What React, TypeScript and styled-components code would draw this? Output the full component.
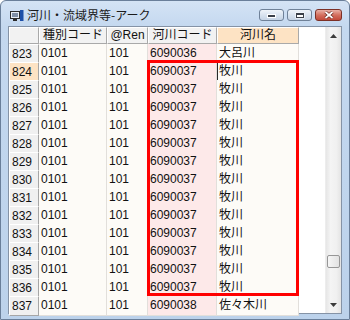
import React from "react";
import styled, { createGlobalStyle } from "styled-components";

const Global = createGlobalStyle`
  html, body { margin: 0; padding: 0; width: 350px; height: 320px; overflow: hidden; background: #ffffff; }
  * { box-sizing: border-box; }
`;

const FONT = `"Liberation Sans", "Noto Sans CJK JP", sans-serif`;

const Window = styled.div`
  width: 350px;
  height: 320px;
  display: flex;
  flex-direction: column;
  padding: 0 7px 5px 7px;
  background: linear-gradient(to bottom, #d4e3f5 0px, #c4d8ef 26px, #bcd2eb 100%);
  border: 1px solid #6a7f9a;
  border-radius: 6px 6px 0 0;
  font-family: ${FONT};
`;

const TitleBar = styled.div`
  height: 25px;
  display: flex;
  align-items: flex-start;
  padding-left: 2px;
`;

const TitleIcon = styled.svg`
  margin-top: 9px;
  width: 14px;
  height: 12px;
  flex: none;
`;

const TitleText = styled.div`
  margin-left: 3px;
  margin-top: 6px;
  font-size: 12px;
  line-height: 16px;
  color: #1b1b1b;
  white-space: nowrap;
  font-family: "Noto Sans CJK JP", sans-serif;
`;

const Spacer = styled.div`
  flex: 1;
`;

const Buttons = styled.div`
  display: flex;
  gap: 3px;
  margin-top: 8px;
`;

const CaptionButton = styled.div<{ $close?: boolean }>`
  width: ${(p) => (p.$close ? 27 : 25)}px;
  height: 12px;
  border-radius: 3px;
  border: 1px solid ${(p) => (p.$close ? "#7c3026" : "#6f8198")};
  background: ${(p) =>
    p.$close
      ? "linear-gradient(to bottom, #e9b1a6, #d4705f 50%, #c24a3a)"
      : "linear-gradient(to bottom, #f0f4f9, #d9e3ef 50%, #c5d3e4)"};
  display: flex;
  align-items: center;
  justify-content: center;
`;

const Client = styled.div`
  flex: 1;
  display: flex;
  border: 1px solid #8593a6;
  background: #ffffff;
  min-height: 0;
`;

const TableArea = styled.div`
  position: relative;
  flex: 1;
  background: #ffffff;
`;

const Row = styled.div<{ $header?: boolean }>`
  display: grid;
  grid-template-columns: 30px 68px 41px 69px 82px;
  height: ${(p) => (p.$header ? 17 : 18)}px;
`;

const HeadCell = styled.div<{ $accent?: boolean }>`
  background: ${(p) => (p.$accent ? "#fde3c4" : "#f2f2f2")};
  border-top: 1px solid #ffffff;
  border-left: 1px solid #ffffff;
  border-right: 1px solid #a9a9a9;
  border-bottom: 1px solid #a9a9a9;
  font-size: 12px;
  line-height: 15px;
  text-align: center;
  color: #111;
  white-space: nowrap;
  overflow: hidden;
`;

const RowHead = styled.div<{ $current?: boolean }>`
  background: ${(p) => (p.$current ? "#fde3c4" : "#f0f0f0")};
  border-top: 1px solid #ffffff;
  border-left: 1px solid #ffffff;
  border-right: 1px solid #a6a6a6;
  border-bottom: 1px solid #a6a6a6;
  font-size: 12px;
  line-height: 17px;
  padding-left: 2px;
  padding-top: 1px;
  color: #111;
`;

const Cell = styled.div<{ $tone?: "pink" | "cream"; $selected?: boolean }>`
  background: ${(p) => (p.$tone === "pink" ? "#fde9e9" : "#fdfbf7")};
  border-right: 1px solid #e2dfdb;
  border-bottom: 1px solid #e2dfdb;
  font-size: 12px;
  line-height: 17px;
  padding: 1px 0 0 2px;
  color: #111;
  white-space: nowrap;
  overflow: hidden;
  box-shadow: ${(p) => (p.$selected ? "inset 0 0 0 1px #2a2a2a" : "none")};
`;

const Highlight = styled.div`
  position: absolute;
  left: 138px;
  top: 33px;
  width: 152px;
  height: 236px;
  border: 3px solid #ff0000;
  pointer-events: none;
`;

const ScrollBar = styled.div`
  width: 16px;
  display: flex;
  flex-direction: column;
  background: linear-gradient(to right, #e6e6e6, #f4f4f4 30%, #f0f0f0 70%, #e4e4e4);
  border-left: 1px solid #ededed;
`;

const ArrowButton = styled.div`
  height: 17px;
  display: flex;
  align-items: center;
  justify-content: center;
`;

const Track = styled.div`
  flex: 1;
  display: flex;
  flex-direction: column;
  justify-content: flex-end;
  padding-bottom: 28px;
`;

const Thumb = styled.div`
  height: 13px;
  margin: 0 1px 0 1px;
  border: 1px solid #979797;
  border-radius: 2px;
  background: linear-gradient(to right, #f6f6f6, #e2e2e2);
`;

type RowData = { no: number; kind: string; ren: string; code: string; name: string };

const rows: RowData[] = [
  { no: 823, kind: "0101", ren: "101", code: "6090036", name: "大呂川" },
  ...Array.from({ length: 13 }, (_, i) => ({
    no: 824 + i,
    kind: "0101",
    ren: "101",
    code: "6090037",
    name: "牧川",
  })),
  { no: 837, kind: "0101", ren: "101", code: "6090038", name: "佐々木川" },
];

export default function App() {
  return (
    <>
      <Global />
      <Window>
        <TitleBar>
          <TitleIcon viewBox="0 0 14 12">
            <rect x="0.5" y="1.5" width="9" height="7" fill="#e8eef5" stroke="#2b2b2b" />
            <rect x="2" y="3" width="6" height="4" fill="#7f8fa6" />
            <rect x="3" y="9" width="4" height="2" fill="#2b2b2b" />
            <rect x="10" y="0" width="3.5" height="11" fill="#1d4fa8" />
          </TitleIcon>
          <TitleText>河川・流域界等-アーク</TitleText>
          <Spacer />
          <Buttons>
            <CaptionButton>
              <svg width="9" height="5" viewBox="0 0 9 5">
                <rect x="0.5" y="1.5" width="8" height="3" fill="#3a3f48" stroke="#ffffff" strokeWidth="1" />
              </svg>
            </CaptionButton>
            <CaptionButton>
              <svg width="10" height="7" viewBox="0 0 10 7">
                <rect x="0.5" y="0.5" width="9" height="6" fill="#ffffff" />
                <rect x="1.5" y="1.5" width="7" height="4" fill="none" stroke="#3a3f48" strokeWidth="1" />
                <rect x="2" y="2" width="6" height="1" fill="#3a3f48" />
              </svg>
            </CaptionButton>
            <CaptionButton $close>
              <svg width="10" height="8" viewBox="0 0 10 8">
                <path d="M1.5 1 L8.5 7 M8.5 1 L1.5 7" stroke="#5a1a12" strokeWidth="3" />
                <path d="M1.5 1 L8.5 7 M8.5 1 L1.5 7" stroke="#ffffff" strokeWidth="1.8" />
              </svg>
            </CaptionButton>
          </Buttons>
        </TitleBar>
        <Client>
          <TableArea>
            <Row $header>
              <HeadCell />
              <HeadCell>種別コード</HeadCell>
              <HeadCell>@Ren</HeadCell>
              <HeadCell>河川コード</HeadCell>
              <HeadCell $accent>河川名</HeadCell>
            </Row>
            {rows.map((r) => (
              <Row key={r.no}>
                <RowHead $current={r.no === 824}>{r.no}</RowHead>
                <Cell>{r.kind}</Cell>
                <Cell>{r.ren}</Cell>
                <Cell $tone="pink">{r.code}</Cell>
                <Cell $selected={r.no === 824}>{r.name}</Cell>
              </Row>
            ))}
            <Highlight />
          </TableArea>
          <ScrollBar>
            <ArrowButton>
              <svg width="7" height="4" viewBox="0 0 7 4">
                <path d="M0 4 L3.5 0 L7 4 Z" fill="#3c3c3c" />
              </svg>
            </ArrowButton>
            <Track>
              <Thumb />
            </Track>
            <ArrowButton>
              <svg width="7" height="4" viewBox="0 0 7 4">
                <path d="M0 0 L7 0 L3.5 4 Z" fill="#3c3c3c" />
              </svg>
            </ArrowButton>
          </ScrollBar>
        </Client>
      </Window>
    </>
  );
}
